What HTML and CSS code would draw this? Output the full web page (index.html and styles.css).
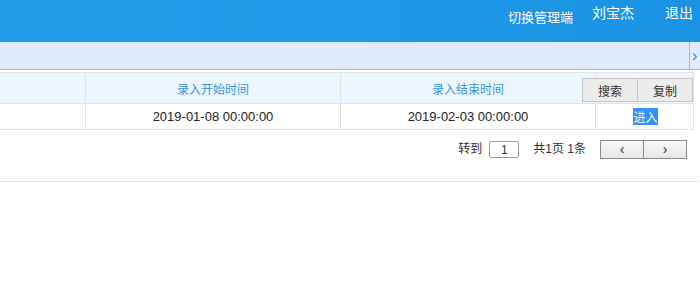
FILE: index.html
```html
<!DOCTYPE html>
<html lang="zh-CN">
<head>
    <meta charset="UTF-8">
    <title>录入管理</title>
    <link rel="stylesheet" href="styles.css">
</head>
<body>
    <!-- Top bar -->
    <div class="topbar">
        <a class="top-link switch">切换管理端</a>
        <span class="top-link user">刘宝杰</span>
        <a class="top-link logout">退出</a>
    </div>

    <!-- Tabs -->
    <div class="tabbar">
        <div class="tab-space"></div>
        <div class="tab-next">›</div>
    </div>

    <!-- Grid -->
    <div class="grid-panel">
        <div class="grid-tools">
            <button class="tool-btn">搜索</button>
            <button class="tool-btn">复制</button>
        </div>
        <table class="grid">
            <thead>
                <tr>
                    <th class="col-a"></th>
                    <th class="col-b">录入开始时间</th>
                    <th class="col-c">录入结束时间</th>
                    <th class="col-d"></th>
                </tr>
            </thead>
            <tbody>
                <tr>
                    <td></td>
                    <td>2019-01-08 00:00:00</td>
                    <td>2019-02-03 00:00:00</td>
                    <td><span class="enter">进入</span></td>
                </tr>
            </tbody>
        </table>

        <div class="pager">
            <span class="pager-label">转到</span>
            <input class="pager-input" type="text" value="1">
            <span class="pager-total">共1页 1条</span>
            <div class="pager-nav">
                <button class="nav-btn">‹</button>
                <button class="nav-btn">›</button>
            </div>
        </div>
    </div>
</body>
</html>
```

FILE: styles.css
```css
/* Reset */
body, table, th, td, button, input {
    margin: 0;
    padding: 0;
}

body {
    background: #fff;
    color: #222;
    font-family: "Liberation Sans", "Noto Sans CJK SC", sans-serif;
    overflow: hidden;
}

/* Top bar */
.topbar {
    height: 42px;
    background: linear-gradient(to right, #239de9, #1b93e5);
    display: flex;
    justify-content: flex-end;
    align-items: flex-start;
    padding-right: 7px;
    color: #fff;
}

.top-link {
    font-family: "Noto Sans CJK SC", sans-serif;
    font-size: 14px;
    line-height: 14px;
    margin-top: 5px;
}

.switch {
    font-size: 13px;
    line-height: 13px;
    margin-top: 10px;
    margin-right: 19px;
}

.user {
    margin-right: 31px;
}

/* Tabs */
.tabbar {
    height: 27px;
    background: #e0ecfe;
    border-bottom: 1px solid #a3b9e3;
    display: flex;
}

.tab-space {
    flex: 1;
}

.tab-next {
    width: 8px;
    padding-left: 2px;
    border-left: 1px solid #a3b9e3;
    color: #2a86d8;
    font-size: 16px;
    line-height: 27px;
    overflow: hidden;
}

/* Grid */
.grid-panel {
    position: relative;
    width: 698px;
    margin-top: 2px;
}

.grid-tools {
    position: absolute;
    top: 6px;
    left: 582px;
    display: flex;
}

.tool-btn {
    width: 56px;
    height: 24px;
    border: 1px solid #c6c6c6;
    background: #ececec;
    color: #333;
    font-family: "Noto Sans CJK SC", sans-serif;
    font-size: 12px;
}

.tool-btn + .tool-btn {
    margin-left: -1px;
}

.grid {
    border-collapse: separate;
    border-spacing: 0;
    table-layout: fixed;
    width: 694px;
    border-top: 1px solid #e3e3e3;
}

.grid th, .grid td {
    box-sizing: border-box;
    border-right: 1px solid #e3e3e3;
    border-bottom: 1px solid #e3e3e3;
    text-align: center;
    font-weight: normal;
}

.grid th {
    height: 31px;
    background: #edf5fd;
    color: #3a95e0;
    font-family: "Noto Sans CJK SC", sans-serif;
    font-size: 12px;
}

.grid td {
    height: 26px;
    font-size: 13px;
    color: #222;
}

.col-a { width: 86px; }
.col-b { width: 255px; }
.col-c { width: 255px; }
.col-d { width: 98px; }

.enter {
    display: inline-block;
    background: #3390ff;
    color: #fff;
    font-family: "Noto Sans CJK SC", sans-serif;
    font-size: 12px;
    line-height: 17px;
    margin-left: 2px;
}

/* Pager */
.pager {
    height: 52px;
    box-sizing: border-box;
    padding: 10px 11px 0 0;
    border-bottom: 1px solid #e3e3e3;
    display: flex;
    justify-content: flex-end;
    align-items: flex-start;
    font-size: 12px;
    color: #333;
}

.pager-label, .pager-total {
    font-family: "Liberation Sans", "Noto Sans CJK SC", sans-serif;
    line-height: 19px;
}

.pager-input {
    box-sizing: border-box;
    width: 30px;
    height: 17px;
    margin: 1px 0 0 7px;
    border: 1px solid #999;
    border-radius: 2px;
    text-align: center;
    font-size: 12px;
    color: #333;
    font-family: "Liberation Sans", sans-serif;
}

.pager-total {
    margin-left: 14px;
}

.pager-nav {
    display: flex;
    margin-left: 14px;
}

.nav-btn {
    width: 44px;
    height: 19px;
    border: 1px solid #8a8a8a;
    background: linear-gradient(#fafafa, #e6e6e6);
    color: #333;
    font-size: 14px;
    line-height: 15px;
}

.nav-btn + .nav-btn {
    margin-left: -1px;
}
```
